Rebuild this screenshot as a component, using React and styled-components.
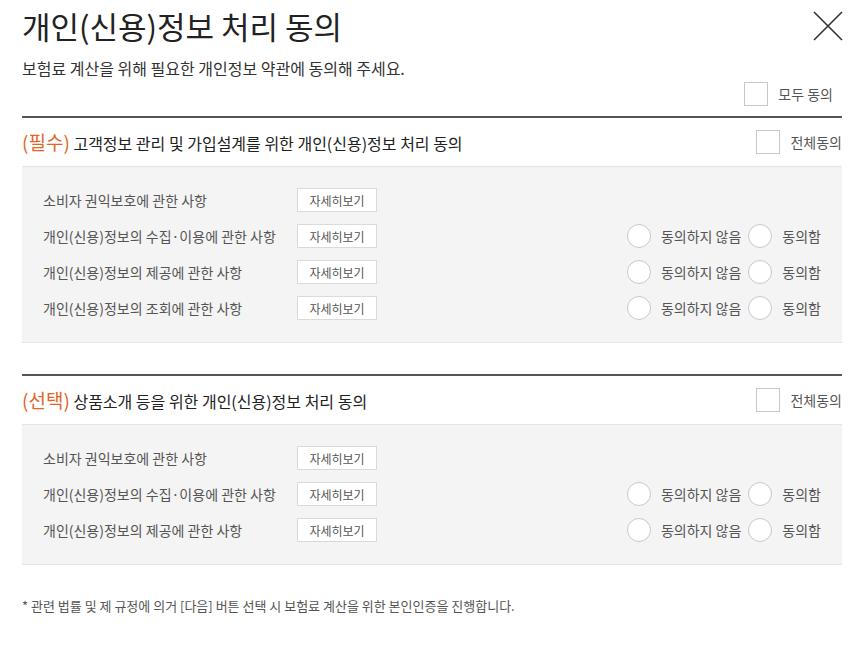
import styled, { createGlobalStyle } from "styled-components"

const Global = createGlobalStyle`
    body{
        margin: 0;
        background: #FFFFFF;
        font-family: "Noto Sans CJK KR", "Noto Sans", sans-serif;
    }
`

const sections = [
    {
        tag: "(필수)",
        title: "고객정보 관리 및 가입설계를 위한 개인(신용)정보 처리 동의",
        items: [
            { label: "소비자 권익보호에 관한 사항", choice: false },
            { label: "개인(신용)정보의 수집·이용에 관한 사항", choice: true },
            { label: "개인(신용)정보의 제공에 관한 사항", choice: true },
            { label: "개인(신용)정보의 조회에 관한 사항", choice: true }
        ]
    },
    {
        tag: "(선택)",
        title: "상품소개 등을 위한 개인(신용)정보 처리 동의",
        items: [
            { label: "소비자 권익보호에 관한 사항", choice: false },
            { label: "개인(신용)정보의 수집·이용에 관한 사항", choice: true },
            { label: "개인(신용)정보의 제공에 관한 사항", choice: true }
        ]
    }
]

export default function App(){
    return(
        <>
            <Global />
            <Page>
                <Top>
                    <Title>개인(신용)정보 처리 동의</Title>
                    <Close aria-label="닫기">
                        <svg width="30" height="30" viewBox="0 0 30 30">
                            <path d="M1 1 L29 29 M29 1 L1 29" stroke="#333" strokeWidth="1.6" fill="none"/>
                        </svg>
                    </Close>
                </Top>
                <Sub>보험료 계산을 위해 필요한 개인정보 약관에 동의해 주세요.</Sub>

                <AllAgree>
                    <Check />
                    <CheckText>모두 동의</CheckText>
                </AllAgree>

                {sections.map((sec, i) => (
                    <Section key={i} first={i === 0}>
                        <SectionHead>
                            <HeadTitle><Tag>{sec.tag}</Tag> {sec.title}</HeadTitle>
                            <HeadCheck>
                                <Check />
                                <CheckText>전체동의</CheckText>
                            </HeadCheck>
                        </SectionHead>
                        <Panel>
                            {sec.items.map((item, j) => (
                                <Row key={j}>
                                    <Label>{item.label}</Label>
                                    <Detail>자세히보기</Detail>
                                    {item.choice ?
                                        <Choices>
                                            <Radio />
                                            <RadioText>동의하지 않음</RadioText>
                                            <Radio second />
                                            <RadioText>동의함</RadioText>
                                        </Choices>
                                        :
                                        <></>
                                    }
                                </Row>
                            ))}
                        </Panel>
                    </Section>
                ))}

                <Note>* 관련 법률 및 제 규정에 의거 [다음] 버튼 선택 시 보험료 계산을 위한 본인인증을 진행합니다.</Note>
            </Page>
        </>
    )
}

const Page = styled.div`
    width: 820px;
    padding: 8px 0 0 22px;
    box-sizing: content-box;
`

const Top = styled.div`
    display: flex;
    align-items: center;
    justify-content: space-between;
    height: 36px;
`

const Title = styled.h1`
    margin: 0;
    font-size: 31px;
    font-weight: 400;
    color: #222222;
    line-height: 36px;
`

const Close = styled.button`
    width: 30px;
    height: 30px;
    padding: 0;
    margin-right: -1px;
    border: none;
    background: none;
    display: flex;
`

const Sub = styled.p`
    margin: 13px 0 0;
    font-size: 16px;
    line-height: 22px;
    color: #333333;
`

const AllAgree = styled.div`
    display: flex;
    align-items: center;
    justify-content: flex-end;
    gap: 10px;
    height: 24px;
    margin-top: 3px;
    padding-right: 9px;
`

const Check = styled.span`
    width: 24px;
    height: 24px;
    box-sizing: border-box;
    border: 1px solid #C8C8C8;
    background: #FFFFFF;
`

const CheckText = styled.span`
    font-size: 14px;
    line-height: 20px;
    color: #555555;
`

const Section = styled.div`
    margin-top: ${props => props.first ? "10px" : "31px"};
    border-top: 2px solid #555555;
`

const SectionHead = styled.div`
    height: 48px;
    display: flex;
    align-items: center;
    justify-content: space-between;
`

const HeadTitle = styled.div`
    font-size: 16px;
    line-height: 24px;
    color: #222222;
`

const Tag = styled.span`
    font-size: 19px;
    color: #E0662A;
`

const HeadCheck = styled.div`
    display: flex;
    align-items: center;
    gap: 10px;
`

const Panel = styled.div`
    background: #F4F4F4;
    border-top: 1px solid #E5E5E5;
    border-bottom: 1px solid #E5E5E5;
    padding: 21px 21px 22px 21px;
    display: flex;
    flex-direction: column;
    gap: 12px;
`

const Row = styled.div`
    display: flex;
    align-items: center;
    height: 24px;
`

const Label = styled.span`
    width: 254px;
    font-size: 14px;
    line-height: 20px;
    color: #555555;
`

const Detail = styled.button`
    width: 80px;
    height: 24px;
    box-sizing: border-box;
    border: 1px solid #DADADA;
    background: #FFFFFF;
    font-family: inherit;
    font-size: 12px;
    color: #555555;
    padding: 0;
`

const Choices = styled.div`
    margin-left: auto;
    display: flex;
    align-items: center;
`

const Radio = styled.span`
    width: 24px;
    height: 24px;
    box-sizing: border-box;
    border-radius: 50%;
    border: 1px solid #C8C8C8;
    background: #FFFFFF;
    margin-left: ${props => props.second ? "7px" : "0"};
`

const RadioText = styled.span`
    margin-left: 10px;
    font-size: 14px;
    line-height: 20px;
    color: #555555;
`

const Note = styled.p`
    margin: 32px 0 0;
    font-size: 13px;
    line-height: 18px;
    color: #555555;
`
